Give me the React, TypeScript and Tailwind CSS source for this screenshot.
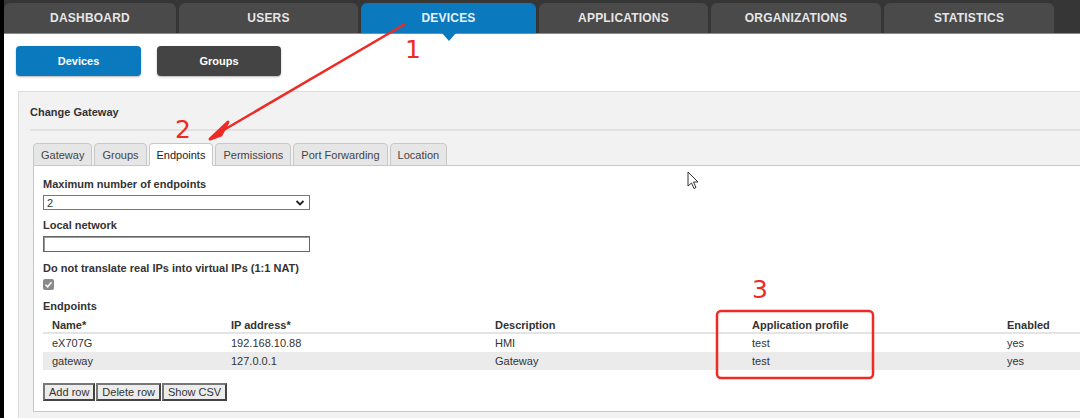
import React from "react";

const mainTabs = [
  { label: "DASHBOARD", w: "w-[172px]" },
  { label: "USERS", w: "w-[179px]" },
  { label: "DEVICES", w: "w-[175px]", active: true },
  { label: "APPLICATIONS", w: "w-[169px]" },
  { label: "ORGANIZATIONS", w: "w-[170px]" },
  { label: "STATISTICS", w: "w-[170px]" },
];

const subTabs = ["Gateway", "Groups", "Endpoints", "Permissions", "Port Forwarding", "Location"];

const rows = [
  { name: "eX707G", ip: "192.168.10.88", desc: "HMI", profile: "test", enabled: "yes" },
  { name: "gateway", ip: "127.0.0.1", desc: "Gateway", profile: "test", enabled: "yes" },
];

const cols = "grid grid-cols-[179px_264px_257px_255px_1fr]";

const App: React.FC = () => {
  return (
    <div className="relative w-[1080px] h-[418px] overflow-hidden bg-white border-l-4 border-black font-['Liberation_Sans',Arial,sans-serif] text-[11px] leading-[16px] text-[#333]">
      {/* top nav */}
      <nav className="relative flex h-[34px] gap-[3px] bg-[#363636] pt-[3px] border-b border-[#8a8a8a]">
        {mainTabs.map((t) => (
          <div
            key={t.label}
            className={`relative flex ${t.w} items-center justify-center rounded-t-[6px] text-[12px] font-bold tracking-[0.2px] ${
              t.active ? "bg-[#0b79bd] text-[#e8f1f8]" : "bg-[#4a4a4a] text-[#e6e6e6]"
            }`}
          >
            {t.label}
            {t.active && (
              <span className="absolute left-1/2 top-full -ml-[7px] h-0 w-0 border-x-[7px] border-t-[8px] border-x-transparent border-t-[#0b79bd]" />
            )}
          </div>
        ))}
      </nav>

      <div className="pl-3">
        {/* device / groups buttons */}
        <div className="mt-[12px] flex gap-4">
          <button className="h-[30px] w-[125px] rounded-[4px] bg-[#0b79bd] text-[11px] font-bold text-white shadow-[0_1px_2px_rgba(0,0,0,0.3)]">
            Devices
          </button>
          <button className="h-[30px] w-[124px] rounded-[4px] bg-[#444] text-[11px] font-bold text-white shadow-[0_1px_2px_rgba(0,0,0,0.3)]">
            Groups
          </button>
        </div>

        {/* outer panel */}
        <div className="ml-[2px] mt-[15px] w-[1100px] border border-[#dcdcdc] bg-[#f2f2f2] pb-[6px]">
          <div className="mx-[11px] border-b-2 border-[#e2e2e2] pt-[12px] pb-[9px] font-bold text-[#333]">Change Gateway</div>

          <div className="ml-[14px] mt-[12px]">
            <div className="flex gap-[2px]">
              {subTabs.map((s) => (
                <div
                  key={s}
                  className={`relative -mb-px flex h-[23px] items-center rounded-t-[4px] border border-[#c8c8c8] px-[7px] text-[11px] ${
                    s === "Endpoints" ? "z-10 border-b-white bg-white text-[#222]" : "bg-[#e6e6e6] text-[#444]"
                  }`}
                >
                  {s}
                </div>
              ))}
            </div>

            <div className="border border-[#c8c8c8] bg-white pl-[9px] pt-[10px] pb-[10px]">
              <div className="font-bold">Maximum number of endpoints</div>
              <div className="mt-[3px] flex h-[15px] w-[267px] items-center justify-between border border-[#777] px-[3px] text-[11px]">
                <span>2</span>
                <svg width="10" height="8" viewBox="0 0 10 8" className="mr-[1px]">
                  <path d="M1.5 2 L5 5.5 L8.5 2" fill="none" stroke="#222" strokeWidth="1.8" />
                </svg>
              </div>

              <div className="mt-[7px] font-bold">Local network</div>
              <div className="mt-[3px] h-[16px] w-[267px] border border-[#666] shadow-[inset_1px_1px_0_#999]" />

              <div className="mt-[8px] font-bold">Do not translate real IPs into virtual IPs (1:1 NAT)</div>
              <div className="mt-[3px] flex h-[11px] w-[11px] items-center justify-center rounded-[2px] bg-[#8a8a8a]">
                <svg width="9" height="9" viewBox="0 0 9 9">
                  <path d="M1.5 4.8 L3.6 6.8 L7.5 2.2" fill="none" stroke="#fff" strokeWidth="1.5" />
                </svg>
              </div>

              <div className="mt-[8px] font-bold">Endpoints</div>
              <div className="mt-[3px]">
                <div className={`${cols} h-[17px] items-center border-b-2 border-[#e4e4e4] font-bold`}>
                  <div className="pl-[9px]">Name*</div>
                  <div className="pl-[9px]">IP address*</div>
                  <div className="pl-[9px]">Description</div>
                  <div className="pl-[9px]">Application profile</div>
                  <div className="pl-[9px]">Enabled</div>
                </div>
                {rows.map((r, i) => (
                  <div key={r.name} className={`${cols} h-[18px] items-center ${i % 2 ? "bg-[#ebebeb]" : "bg-white"}`}>
                    <div className="pl-[9px]">{r.name}</div>
                    <div className="pl-[9px]">{r.ip}</div>
                    <div className="pl-[9px]">{r.desc}</div>
                    <div className="pl-[9px]">{r.profile}</div>
                    <div className="pl-[9px]">{r.enabled}</div>
                  </div>
                ))}
              </div>

              <div className="mt-[13px] flex gap-[1px]">
                {["Add row", "Delete row", "Show CSV"].map((b) => (
                  <button
                    key={b}
                    className="h-[18px] border-2 border-[#444] border-t-[#777] border-l-[#777] bg-[#ececec] px-[4px] text-[11px] leading-none text-[#333]"
                  >
                    {b}
                  </button>
                ))}
              </div>
            </div>
          </div>
        </div>
      </div>

      {/* red annotations */}
      <svg className="pointer-events-none absolute -left-1 top-0" width="1080" height="418">
        <line x1="405" y1="24" x2="222" y2="131" stroke="#ee2a24" strokeWidth="2.5" />
        <path d="M210 139 L228 122 L221 135 Z" fill="#ee2a24" stroke="#ee2a24" strokeWidth="3" strokeLinejoin="round" />
        <rect x="717" y="311" width="156" height="67" rx="4" fill="none" stroke="#ee2a24" strokeWidth="2.5" />
        <path d="M688 172 L688 186 L691.5 183 L694 188.5 L696 187.5 L693.5 182 L698 182 Z" fill="#fff" stroke="#333" strokeWidth="1" strokeLinejoin="round" />
      </svg>
      <span className="absolute left-[401px] top-[37px] font-['DejaVu_Sans',sans-serif] text-[25px] leading-none text-[#ee2a24]">1</span>
      <span className="absolute left-[171px] top-[117px] font-['DejaVu_Sans',sans-serif] text-[25px] leading-none text-[#ee2a24]">2</span>
      <span className="absolute left-[748px] top-[277px] font-['DejaVu_Sans',sans-serif] text-[25px] leading-none text-[#ee2a24]">3</span>
    </div>
  );
};

export default App;
